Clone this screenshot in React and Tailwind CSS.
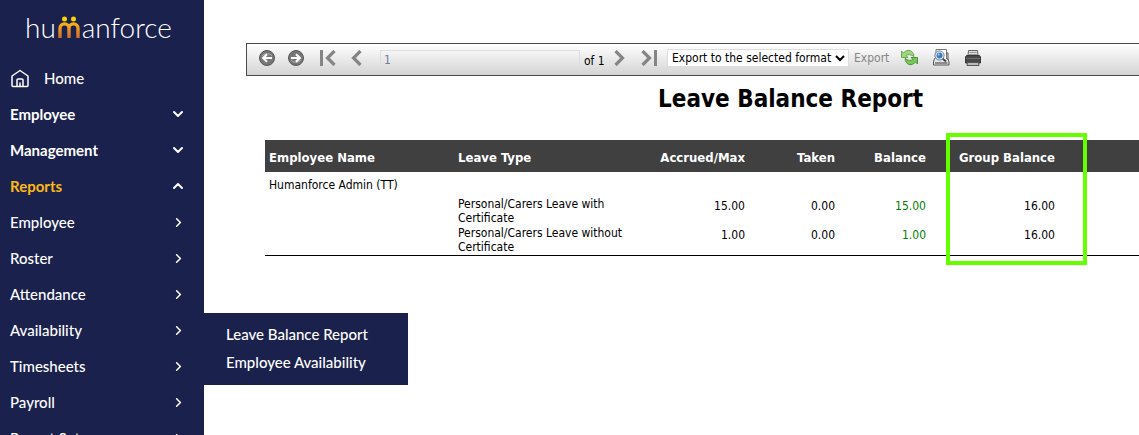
import React, { useState } from 'react';
import { ChevronDown, ChevronRight, ChevronUp } from 'lucide-react';

const sections = [
  { label: 'Employee', open: false },
  { label: 'Management', open: false },
  { label: 'Reports', open: true },
];

const reportGroups = ['Employee', 'Roster', 'Attendance', 'Availability', 'Timesheets', 'Payroll', 'Report Setup'];
const availabilityReports = ['Leave Balance Report', 'Employee Availability'];

const rows = [
  { type: 'Personal/Carers Leave with Certificate', accrued: '15.00', taken: '0.00', balance: '15.00', group: '16.00' },
  { type: 'Personal/Carers Leave without Certificate', accrued: '1.00', taken: '0.00', balance: '1.00', group: '16.00' },
];

function Logo() {
  return (
    <a href="#home" aria-label="humanforce" className="flex items-baseline pl-[25px] pt-[11px] h-[60px] text-[28px] leading-8 font-light text-white">
      <span>hu</span>
      <svg width="24" height="22" viewBox="0 0 24 22" fill="none" className="shrink-0 mx-px">
        <defs>
          <linearGradient id="people" x1="0" y1="6" x2="0" y2="22" gradientUnits="userSpaceOnUse">
            <stop offset="0" stopColor="#fbb81b" />
            <stop offset="1" stopColor="#cf6a2b" />
          </linearGradient>
        </defs>
        <circle cx="7.5" cy="3" r="2.5" fill="#f7d308" />
        <circle cx="16.5" cy="3" r="2.5" fill="#f7d308" />
        <path d="M3 22V12.4a4.5 4.5 0 0 1 9 0V22M12 22V12.4a4.5 4.5 0 0 1 9 0V22" stroke="url(#people)" strokeWidth="3.4" />
      </svg>
      <span>anforce</span>
    </a>
  );
}

function HomeIcon() {
  return (
    <svg width="20" height="20" viewBox="0 0 20 20" fill="none" stroke="#fff" strokeWidth="1.5" strokeLinejoin="round">
      <path d="M2 8 10 2.5 18 8v9.5a1 1 0 0 1-1 1H3a1 1 0 0 1-1-1z" />
      <path d="M7 18.500v-6.500a1 1 0 0 1 1-1h4a1 1 0 0 1 1 1v6.500M10 14.500v4" />
    </svg>
  );
}

function Sidebar() {
  return (
    <nav className="w-[204px] shrink-0 bg-[#1b214d] text-[15px] leading-5 text-white font-['Lato',sans-serif]">
      <Logo />
      <a href="#home" className="flex items-center gap-3.5 h-9 pl-2.5 font-medium">
        <HomeIcon />
        Home
      </a>
      {sections.map(s => (
        <button key={s.label} type="button" className={`flex items-center justify-between w-full h-9 pl-2.5 pr-[18px] font-bold ${s.open ? 'text-[#fdb913]' : ''}`}>
          {s.label}
          {s.open
            ? <ChevronUp size={16} strokeWidth={3} color="#fff" />
            : <ChevronDown size={16} strokeWidth={3} />}
        </button>
      ))}
      {reportGroups.map(g => (
        <div key={g} className="relative">
          <button type="button" className="flex items-center justify-between w-full h-9 pl-2.5 pr-[18px] font-medium">
            {g}
            <ChevronRight size={15} strokeWidth={2.5} />
          </button>
          {g === 'Availability' && (
            <div className="absolute left-full top-px w-[204px] h-[72px] py-[7px] pl-[22px] bg-[#1b214d] font-medium">
              {availabilityReports.map(r => (
                <a key={r} href="#report" className="flex items-center h-7 whitespace-nowrap">{r}</a>
              ))}
            </div>
          )}
        </div>
      ))}
    </nav>
  );
}

function RoundArrow({ flip }) {
  return (
    <svg width="16" height="16" viewBox="0 0 16 16" fill="none" className={flip ? 'rotate-180' : ''}>
      <circle cx="8" cy="8" r="7.5" fill="#777" stroke="#555" />
      <path d="M3 6a5.5 4 0 0 1 10 0" stroke="#aaa" />
      <path d="M13 8H4.500M8 4.200 4.200 8 8 11.800" stroke="#fff" strokeWidth="2.2" />
    </svg>
  );
}

function PageArrow({ bar, flip }) {
  return (
    <svg width={bar ? 16 : 11} height="16" viewBox={bar ? '0 0 16 16' : '5 0 11 16'} fill="none" stroke="#858585" className={flip ? 'rotate-180' : ''}>
      {bar && <path d="M1.500 0v16" strokeWidth="3" />}
      <path d="M14.500 1 7.500 8l7 7" strokeWidth="3.2" />
    </svg>
  );
}

function RefreshIcon() {
  return (
    <svg width="17" height="17" viewBox="0 0 17 17" strokeLinejoin="round">
      <path d="M.5 2v6.500h6.500L5 6.500C7 5 10 5.500 13 7.500 12.500 1.500 7 -1 2.500 4z" fill="#a5d67f" stroke="#4d9a37" strokeWidth=".8" />
      <path d="M16.500 15V8.500H10l2 2c-2 1.500-5 1-8-1 .5 6 6 8.500 10.500 3.500z" fill="#7cc654" stroke="#2f8424" strokeWidth=".8" />
    </svg>
  );
}

function PreviewIcon() {
  return (
    <svg width="17" height="17" viewBox="0 0 17 17" fill="none">
      <path d="M3 .5h10.500V11H3z" fill="#fff" stroke="#777" />
      <path d="M13.500 4h1.500v6.500" stroke="#555" />
      <path d="M2 9.500h-.5L.5 13v3h15.500v-3l-1-3h-1" fill="#e6e6e6" stroke="#555" />
      <path d="M2 14h12.500" stroke="#333" />
      <path d="m9.500 9.500 3.500 3" stroke="#444" strokeWidth="1.800" />
      <circle cx="6.500" cy="6.500" r="4.600" fill="#e4edf7" stroke="#49617d" strokeWidth=".8" />
      <circle cx="6.500" cy="6.500" r="3" fill="#3f79bd" />
      <circle cx="5.600" cy="5.600" r="1" fill="#b5d5f5" />
    </svg>
  );
}

function PrintIcon() {
  return (
    <svg width="16" height="16" viewBox="0 0 16 16" fill="none">
      <path d="M3.500.5h9l.5 5H3z" fill="#ddd" stroke="#666" />
      <path d="M4.500 2.500h7M4 4.500h8" stroke="#999" />
      <path d="M1.500 5.500h13l1 1.500v6H.5V7z" fill="#484848" stroke="#383838" />
      <path d="M1 8.500h14" stroke="#6e6e6e" />
      <path d="M2.500 12.500h11l.5 3H2z" fill="#bbb" stroke="#555" />
    </svg>
  );
}

function Toolbar() {
  const [page, setPage] = useState('1');
  return (
    <div className="flex items-center h-[33px] pl-3 pb-1 border border-r-0 border-[#4a4a4a] bg-linear-to-b from-white to-[#d4d4d4] text-xs">
      <button type="button" aria-label="Back"><RoundArrow /></button>
      <button type="button" aria-label="Forward" className="ml-[13px]"><RoundArrow flip /></button>
      <button type="button" aria-label="First page" className="ml-4"><PageArrow bar /></button>
      <button type="button" aria-label="Previous page" className="ml-[15px]"><PageArrow /></button>
      <input aria-label="Page" value={page} onChange={e => setPage(e.target.value)} className="ml-[18px] mt-1 w-[200px] h-5 px-[3px] border border-b-0 border-[#dedede] text-[#6f7f9c]" />
      <span className="ml-1 mt-1.5 w-6 whitespace-nowrap">of 1</span>
      <button type="button" aria-label="Next page" className="ml-1.5"><PageArrow flip /></button>
      <button type="button" aria-label="Last page" className="ml-4"><PageArrow bar flip /></button>
      <select aria-label="Export format" className="ml-2.5 w-[182px] h-[18px] border border-[#ddd] bg-white">
        <option>Export to the selected format</option>
        <option>Excel</option>
        <option>PDF</option>
      </select>
      <button type="button" disabled className="ml-[5px] w-9 text-left text-[#858585]">Export</button>
      <button type="button" aria-label="Refresh" className="ml-[11px]"><RefreshIcon /></button>
      <button type="button" aria-label="Print preview" className="ml-[15px]"><PreviewIcon /></button>
      <button type="button" aria-label="Print" className="ml-[15px]"><PrintIcon /></button>
    </div>
  );
}

function ReportTable() {
  return (
    <table className="w-full table-fixed border-b border-black text-xs leading-[14px]">
      <colgroup>
        <col className="w-[189px]" />
        <col className="w-[185px]" />
        <col className="w-[110px]" />
        <col className="w-[90px]" />
        <col className="w-[91px]" />
        <col className="w-[129px]" />
        <col />
      </colgroup>
      <thead>
        <tr className="h-8 bg-[#404040] text-[13px] text-white text-right">
          <th className="px-1 pt-1 text-left">Employee Name</th>
          <th className="px-1 pt-1 text-left">Leave Type</th>
          <th className="px-1 pt-1">Accrued/Max</th>
          <th className="px-1 pt-1">Taken</th>
          <th className="px-1 pt-1">Balance</th>
          <th className="relative px-1 pt-1 whitespace-nowrap">
            Group Balance
            <div className="absolute left-4 -top-[7px] w-[141px] h-[132px] border-4 border-[#66ff00] pointer-events-none" />
          </th>
          <th />
        </tr>
      </thead>
      <tbody>
        <tr className="h-[25px]">
          <td colSpan={7} className="px-1">Humanforce Admin (TT)</td>
        </tr>
        {rows.map(r => (
          <tr key={r.type} className="h-[29px] align-top text-right">
            <td />
            <td className="px-1 text-left">{r.type}</td>
            <td className="px-1 pt-0.5">{r.accrued}</td>
            <td className="px-1 pt-0.5">{r.taken}</td>
            <td className="px-1 pt-0.5 text-[#008000]">{r.balance}</td>
            <td className="px-1 pt-0.5">{r.group}</td>
            <td />
          </tr>
        ))}
      </tbody>
    </table>
  );
}

export default function App() {
  return (
    <div className="flex h-screen overflow-hidden bg-white">
      <Sidebar />
      <main className="flex-1 min-w-0 pl-[42px] pt-[43px] text-black font-['Tahoma','DejaVu_Sans_Condensed',sans-serif]">
        <Toolbar />
        <div className="pl-[19px]">
          <h1 className="pt-[5px] pb-[23px] pl-[393px] text-2xl leading-9 font-bold whitespace-nowrap">Leave Balance Report</h1>
          <ReportTable />
        </div>
      </main>
    </div>
  );
}
